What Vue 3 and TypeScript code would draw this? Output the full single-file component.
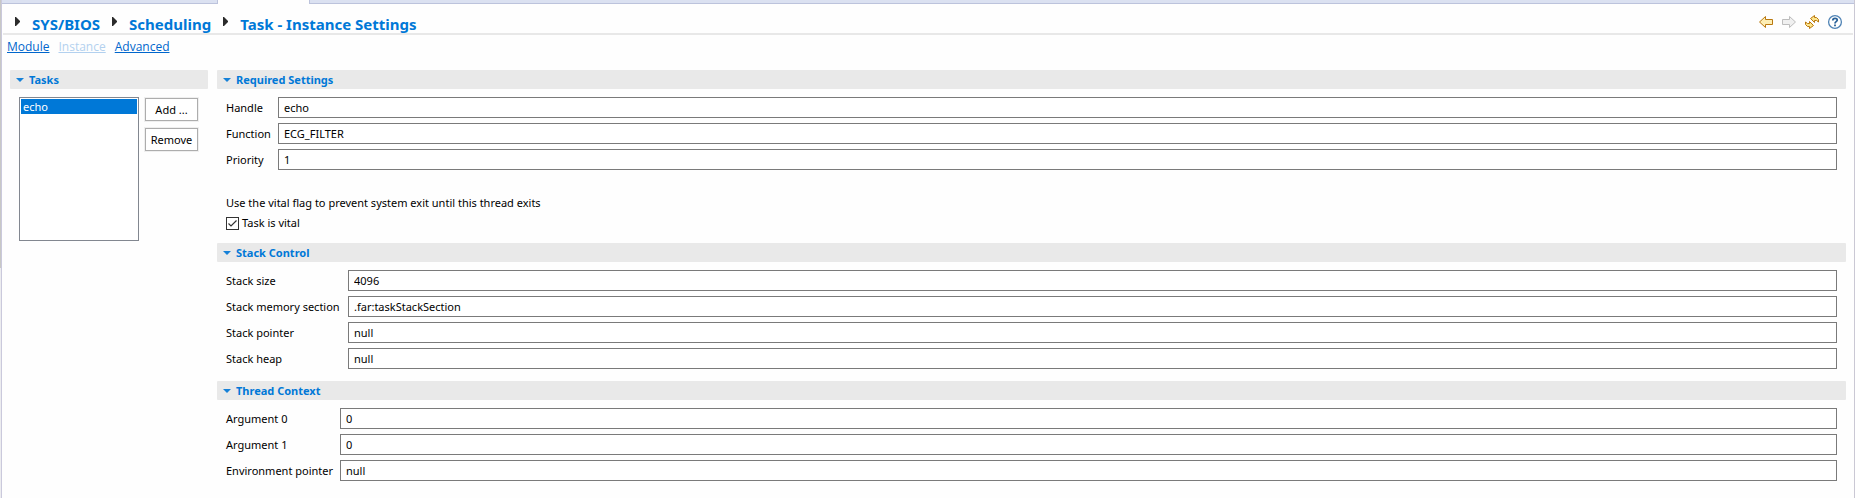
<script setup lang="ts">
import { ref } from 'vue'

interface Field { id: string; label: string; value: string }
interface Section { title: string; kind: string; fields: Field[]; vital?: boolean }

const crumbs = ['SYS/BIOS', 'Scheduling', 'Task - Instance Settings']
const tasks = ['echo']
const selected = ref('echo')
const vital = ref(true)

const sections = ref<Section[]>([
  {
    title: 'Required Settings',
    kind: 'required',
    vital: true,
    fields: [
      { id: 'handle', label: 'Handle', value: 'echo' },
      { id: 'function', label: 'Function', value: 'ECG_FILTER' },
      { id: 'priority', label: 'Priority', value: '1' },
    ],
  },
  {
    title: 'Stack Control',
    kind: 'stack',
    fields: [
      { id: 'stack-size', label: 'Stack size', value: '4096' },
      { id: 'stack-section', label: 'Stack memory section', value: '.far:taskStackSection' },
      { id: 'stack-pointer', label: 'Stack pointer', value: 'null' },
      { id: 'stack-heap', label: 'Stack heap', value: 'null' },
    ],
  },
  {
    title: 'Thread Context',
    kind: 'context',
    fields: [
      { id: 'arg0', label: 'Argument 0', value: '0' },
      { id: 'arg1', label: 'Argument 1', value: '0' },
      { id: 'env', label: 'Environment pointer', value: 'null' },
    ],
  },
])
</script>

<template>
  <div class="window">
    <div class="edge"></div>
    <div class="editor">
      <div class="tabs"><span class="tab-rest first"></span><span class="tab-active"></span><span class="tab-rest"></span></div>
      <header class="header">
        <nav class="crumbs" aria-label="Breadcrumb">
          <template v-for="c in crumbs" :key="c">
            <svg class="crumb-arrow" width="5" height="9" viewBox="0 0 5 9" aria-hidden="true"><path d="M0 0H1L5 4V5L1 9H0Z" fill="#2b2b2b" /></svg>
            <a class="crumb" href="#">{{ c }}</a>
          </template>
        </nav>
        <div class="tools">
          <button class="tool" type="button" aria-label="Back">
            <svg width="16" height="16" viewBox="0 0 16 16"><path d="M1.5 8L7.5 2.5V5.5H14.5V10.5H7.5V13.5Z" fill="#fdeeb4" stroke="#b9780f" /></svg>
          </button>
          <button class="tool" type="button" aria-label="Forward" disabled>
            <svg width="16" height="16" viewBox="0 0 16 16"><path d="M14.5 8L8.5 2.5V5.5H1.5V10.5H8.5V13.5Z" fill="#f0f0f0" stroke="#bdbdbd" /></svg>
          </button>
          <button class="tool" type="button" aria-label="Refresh">
            <svg width="16" height="16" viewBox="0 0 16 16" fill="#fde58c" stroke="#b9780f" stroke-linejoin="round">
              <path d="M6.5 4.5L10.5 1.5V3.5H12.5L14.5 5.5V8L12.5 6.5H10.5V8.5Z" />
              <path d="M9.5 11.5L5.5 14.5V12.5H3.5L1.5 10.5V8L3.5 9.5H5.5V7.5Z" />
            </svg>
          </button>
          <button class="tool" type="button" aria-label="Help">
            <svg width="16" height="16" viewBox="0 0 16 16"><circle cx="8" cy="8" r="6.4" fill="#fff" stroke="#4f83b5" stroke-width="1.3" /><path d="M5.8 6.4C5.8 3.6 10.4 3.7 10.2 6.2C10.1 7.6 8 7.8 8 9.4M8 10.6V12.2" fill="none" stroke="#2a6299" stroke-width="1.8" /></svg>
          </button>
        </div>
      </header>

      <nav class="pages" aria-label="Pages">
        <a href="#">Module</a>
        <a class="current" href="#" aria-current="page">Instance</a>
        <a href="#">Advanced</a>
      </nav>

      <main class="body">
        <section class="tasks">
          <h2 class="bar"><svg class="twist" width="8" height="4" viewBox="0 0 8 4" aria-hidden="true"><path d="M0 0H8L4 4Z" fill="#1681d8" /></svg>Tasks</h2>
          <div class="task-row">
            <select v-model="selected" class="list" size="8" aria-label="Tasks">
              <option v-for="t in tasks" :key="t" :value="t">{{ t }}</option>
            </select>
            <div class="actions">
              <button class="btn" type="button">Add ...</button>
              <button class="btn" type="button">Remove</button>
            </div>
          </div>
        </section>

        <div class="details">
          <section v-for="s in sections" :key="s.kind" class="section" :class="s.kind">
            <h2 class="bar"><svg class="twist" width="8" height="4" viewBox="0 0 8 4" aria-hidden="true"><path d="M0 0H8L4 4Z" fill="#1681d8" /></svg>{{ s.title }}</h2>
            <div class="fields">
              <div v-for="f in s.fields" :key="f.id" class="field">
                <label :for="f.id">{{ f.label }}</label>
                <input :id="f.id" v-model="f.value" class="text" type="text" />
              </div>
            </div>
            <div v-if="s.vital" class="vital">
              <p>Use the vital flag to prevent system exit until this thread exits</p>
              <label class="check">
                <span class="box">
                  <input v-model="vital" type="checkbox" />
                  <svg v-if="vital" class="mark" width="13" height="13" viewBox="0 0 13 13" aria-hidden="true"><path d="M2.5 6.5L5 9L10.5 3.5" fill="none" stroke="#333" stroke-width="1.2" /></svg>
                </span>
                Task is vital
              </label>
            </div>
          </section>
        </div>
      </main>
    </div>
  </div>
</template>

<style>
body {
  margin: 0;
  background: #fff;
}
</style>

<style scoped>
.window {
  display: flex;
  min-height: 100vh;
}
.edge {
  flex: 0 0 1px;
  background:
    linear-gradient(#c8c8c6, #c8c8c6) 0 0 / 1px 268px no-repeat,
    #ececef;
}
.editor {
  flex: 1;
  min-width: 0;
  border-left: 1px solid #cac9dc;
  border-right: 1px solid #cac8d4;
  background: #fefefe;
  color: #000;
  font: 11px/16px "Noto Sans", "Open Sans", sans-serif;
}
.tabs {
  display: flex;
  height: 4px;
}
.tab-rest {
  box-sizing: border-box;
  flex: 1;
  border-bottom: 1px solid #bcc3dc;
  background: #dbe1f1;
}
.tab-rest.first {
  flex: 0 0 216px;
  border-right: 1px solid #bcc3dc;
}
.tab-active {
  box-sizing: border-box;
  flex: 0 0 92px;
  border-right: 1px solid #bcc3dc;
}
.header {
  display: flex;
  justify-content: space-between;
  box-sizing: border-box;
  height: 31px;
  margin: 0 1px;
  border-bottom: 2px solid #e8e8e8;
}
.crumbs {
  display: flex;
  align-items: center;
  padding: 11px 0 0 12px;
}
.crumb {
  margin: 0 12px;
  color: #0078d7;
  font-size: 15px;
  font-weight: 700;
  line-height: 18px;
  text-decoration: none;
  white-space: nowrap;
}
.crumb-arrow {
  margin-bottom: 5px;
}
.tools {
  display: flex;
  gap: 7px;
  padding: 10px 10px 0 0;
}
.tool {
  width: 16px;
  height: 16px;
  padding: 0;
  border: 0;
  background: none;
}
.tool svg {
  display: block;
}
.pages {
  display: flex;
  gap: 9px;
  padding: 4px 5px 0;
  font-family: "Open Sans", "Noto Sans", sans-serif;
  font-size: 12px;
}
.pages a {
  color: #0066cc;
}
.pages .current {
  color: #b3d1ef;
}
.body {
  display: flex;
  gap: 9px;
  padding: 15px 8px 0;
}
.tasks {
  flex: 0 0 198px;
}
.details {
  flex: 1;
  min-width: 0;
}
.bar {
  display: flex;
  align-items: center;
  height: 19px;
  margin: 0;
  padding-left: 6px;
  border-radius: 1px;
  background: #e9e9e9;
  color: #0078d7;
  font-size: 11px;
  font-weight: 700;
}
.twist {
  margin-right: 5px;
}
.task-row {
  display: flex;
  gap: 6px;
  padding: 8px 10px 0 9px;
}
.list {
  box-sizing: border-box;
  flex: 1;
  min-width: 0;
  height: 144px;
  padding: 1px;
  border: 1px solid #828790;
  border-radius: 0;
  outline: 0;
  background: #fff;
  font: inherit;
  overflow: hidden;
}
.list option {
  min-height: 15px;
  padding: 0 2px;
  line-height: 15px;
}
.list option:checked {
  background: #0078d7 linear-gradient(#0078d7, #0078d7);
  color: #fff;
}
.actions {
  display: flex;
  flex-direction: column;
  gap: 7px;
  padding-top: 1px;
}
.btn {
  width: 53px;
  height: 23px;
  padding: 0;
  border: 1px solid #adadad;
  background: #fff;
  box-shadow: 0 0 0 1px #efefef;
  color: #000;
  font: inherit;
}
.fields {
  display: flex;
  flex-direction: column;
  gap: 5px;
  padding: 8px 9px 0;
}
.section {
  padding-bottom: 12px;
}
.field {
  display: flex;
  align-items: center;
}
.field label {
  flex: 0 0 52px;
  white-space: nowrap;
}
.stack .field label {
  flex-basis: 122px;
}
.context .field label {
  flex-basis: 114px;
}
.text {
  box-sizing: border-box;
  flex: 1;
  min-width: 0;
  height: 21px;
  padding: 0 5px;
  border: 1px solid #7a7a7a;
  border-radius: 0;
  outline: 0;
  background: #fff;
  color: #000;
  font: inherit;
}
.vital {
  padding: 25px 9px 0;
}
.vital p {
  margin: 0 0 4px;
}
.check {
  display: flex;
  align-items: center;
  gap: 3px;
}
.box {
  display: grid;
}
.box > * {
  grid-area: 1 / 1;
}
.box input {
  box-sizing: border-box;
  width: 13px;
  height: 13px;
  margin: 0;
  border: 1px solid #333;
  background: #fff;
  appearance: none;
}
.mark {
  pointer-events: none;
}
</style>
